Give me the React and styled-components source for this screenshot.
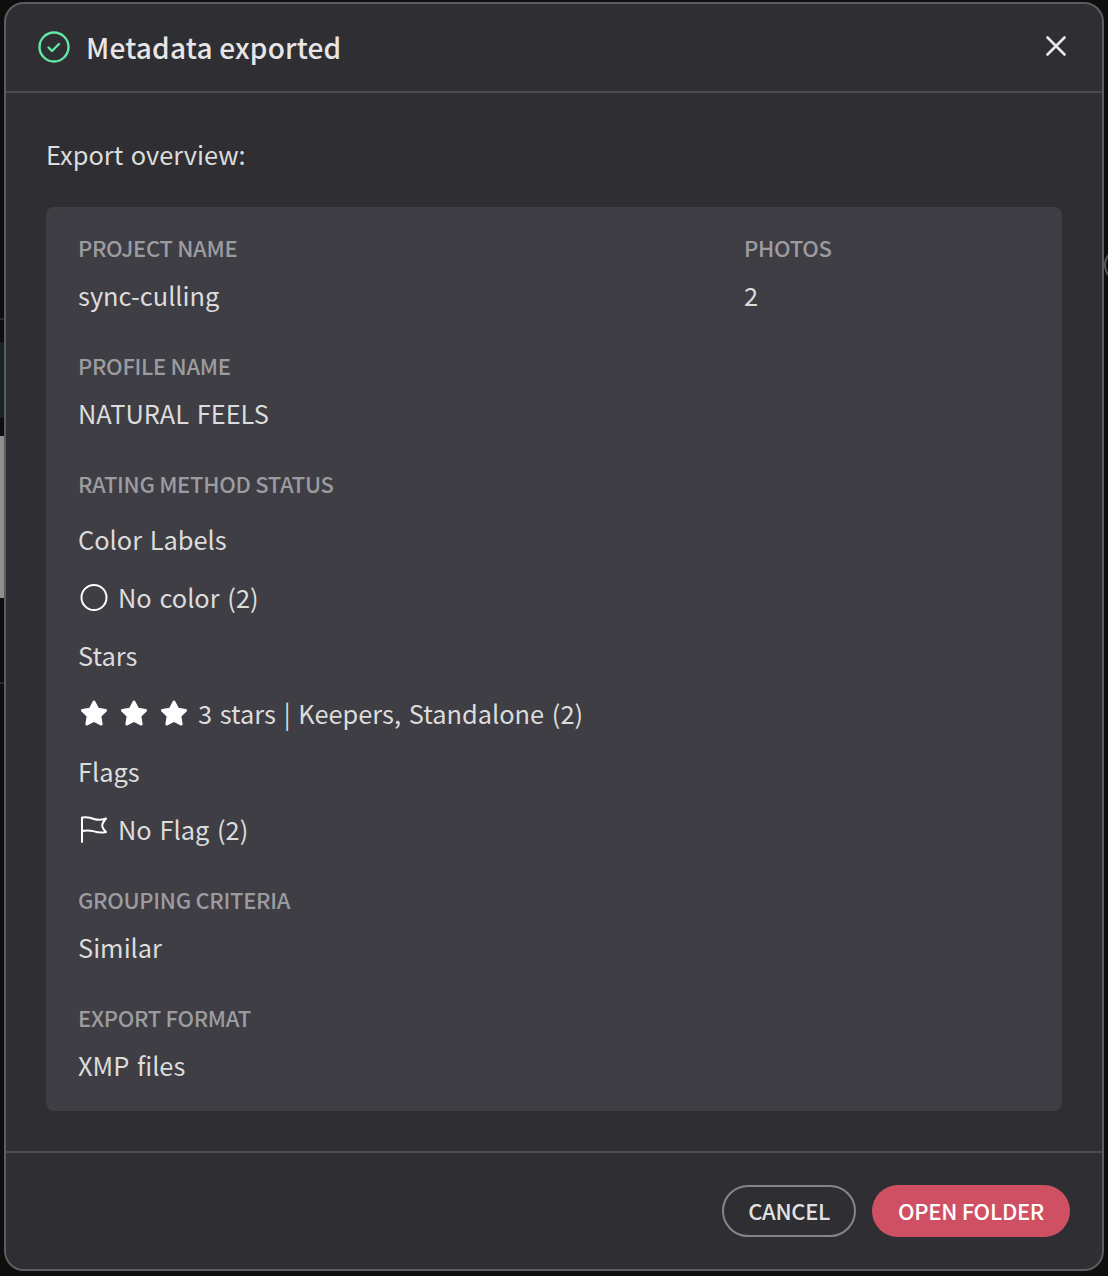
import styled, { createGlobalStyle } from 'styled-components';
import { FaStar } from 'react-icons/fa';

const Global = createGlobalStyle`
  html, body { margin: 0; padding: 0; background: #0e0e0c; }
  body { font-family: "Noto Sans CJK JP", "Noto Sans", sans-serif; }
`

const Page = styled.div`
  position: relative;
  width: 1108px;
  height: 1276px;
  padding: 2px 4px 4px 4px;
  box-sizing: border-box;
  overflow: hidden;
`

// bits of the app showing behind the dialog
const BackdropStrip = styled.div`
  position: absolute;
  left: 0;
  width: 4px;
  top: ${p => p.$top}px;
  height: ${p => p.$height}px;
  background: ${p => p.$color};
`

const BackdropArc = styled.div`
  position: absolute;
  left: 1104px;
  top: 248px;
  width: 30px;
  height: 30px;
  border: 2px solid #55555a;
  border-radius: 50%;
`

const Dialog = styled.div`
  position: relative;
  height: 1269px;
  box-sizing: border-box;
  width: 1100px;
  background: #2e2e33;
  border: 2px solid #5c5c62;
  border-radius: 20px;
  display: flex;
  flex-direction: column;
`

const Header = styled.div`
  height: 87px;
  flex: none;
  box-sizing: content-box;
  display: flex;
  align-items: center;
  padding: 0 36px 2px 32px;
  margin-top: -2px;
  gap: 16px;
  border-bottom: 2px solid #4a4a4f;
`

const Title = styled.h1`
  flex: 1;
  margin: 2px 0 0;
  font-size: 28px;
  font-weight: 500;
  letter-spacing: 0.2px;
  color: #e6e6e6;
`

const CloseButton = styled.button`
  border: 0;
  padding: 0;
  background: none;
  display: flex;
  color: #e8e8e8;
`

const Body = styled.div`
  flex: 1;
  padding: 43px 40px 40px 40px;
  display: flex;
  flex-direction: column;
`

const Intro = styled.div`
  font-size: 25.4px;
  word-spacing: 1.8px;
  line-height: 36px;
  color: #dcdcdc;
  margin-bottom: 35px;
`

const Panel = styled.div`
  background: #3e3e44;
  border-radius: 8px;
  height: 904px;
  box-sizing: border-box;
  padding: 22px 32px;
  display: grid;
  grid-template-columns: 666px 1fr;
  align-content: start;
`

const Column = styled.div`
  display: flex;
  flex-direction: column;
`

const Label = styled.div`
  font-size: 22px;
  letter-spacing: -0.3px;
  font-weight: 500;
  line-height: 36px;
  color: #9c9ca0;
  margin-top: ${p => (p.$first ? 0 : 34)}px;
  margin-bottom: ${p => (p.$wide ? 20 : 12)}px;
`

const Value = styled.div`
  font-size: 25.4px;
  word-spacing: 2px;
  line-height: 36px;
  color: #dcdcdc;
  display: flex;
  align-items: center;
  gap: 10px;
  margin-bottom: ${p => (p.$gap ? 22 : 0)}px;
`

const Stars = styled.span`
  display: inline-flex;
  gap: 12px;
  color: #fff;
  font-size: 28px;
  margin: 0 0 0 2px;
`

const Footer = styled.div`
  height: 118px;
  flex: none;
  box-sizing: border-box;
  border-top: 2px solid #4a4a4f;
  display: flex;
  justify-content: flex-end;
  align-items: flex-start;
  gap: 16px;
  padding: 32px 32px 0 0;
`

const Button = styled.button`
  height: 52px;
  box-sizing: border-box;
  padding: 0 ${p => (p.$primary ? 26 : 24)}px 2px;
  border-radius: 26px;
  font-family: inherit;
  font-size: 22px;
  letter-spacing: -0.3px;
  font-weight: 500;
  color: ${p => (p.$primary ? '#fff' : '#e2e2e2')};
  background: ${p => (p.$primary ? '#d05063' : 'transparent')};
  border: ${p => (p.$primary ? '0' : '2px solid #86868a')};
`

const CheckSvg = styled.svg`
  margin-top: 2px;
`

const CheckIcon = () => (
  <CheckSvg width="32" height="32" viewBox="0 0 32 32" fill="none" stroke="#62e8a4" strokeWidth="2.4" strokeLinecap="round" strokeLinejoin="round">
    <circle cx="16" cy="16" r="14.5" />
    <path d="M10.500 16.500l3.500 3.500 7-7" />
  </CheckSvg>
)

const CloseIcon = () => (
  <svg width="20" height="20" viewBox="0 0 20 20" stroke="currentColor" strokeWidth="2.6" strokeLinecap="round">
    <path d="M1.500 1.500l17 17M18.500 1.500l-17 17" />
  </svg>
)

const CircleIcon = () => (
  <svg width="30" height="30" viewBox="0 0 30 30" fill="none" stroke="#fff" strokeWidth="2">
    <circle cx="16" cy="15.500" r="12.500" />
  </svg>
)

const FlagIcon = () => (
  <svg width="30" height="30" viewBox="0 0 30 30" fill="none" stroke="#fff" strokeWidth="2" strokeLinejoin="round" strokeLinecap="round">
    <path d="M4 28V3.500c4-.6 8-.3 12 1.500 4 1.300 8 1 12-.5-2.500 3-3.800 5-3.800 7 0 2 1.300 4 3.800 6.500-4 1-8 .6-12-.6-4-1.200-8-1.200-12-.4" />
  </svg>
)

export default function App() {
  return (
    <Page>
      <Global />
      <BackdropStrip $top={318} $height={2} $color="#2a2a2a" />
      <BackdropStrip $top={342} $height={76} $color="#1b2427" />
      <BackdropStrip $top={436} $height={162} $color="#8f8f8c" />
      <BackdropStrip $top={682} $height={2} $color="#2a2a2a" />
      <BackdropArc />
      <Dialog>
        <Header>
          <CheckIcon />
          <Title>Metadata exported</Title>
          <CloseButton><CloseIcon /></CloseButton>
        </Header>
        <Body>
          <Intro>Export overview:</Intro>
          <Panel>
            <Column>
              <Label $first>PROJECT NAME</Label>
              <Value>sync-culling</Value>
              <Label>PROFILE NAME</Label>
              <Value>NATURAL FEELS</Value>
              <Label $wide>RATING METHOD STATUS</Label>
              <Value $gap>Color Labels</Value>
              <Value $gap><CircleIcon />No color (2)</Value>
              <Value $gap>Stars</Value>
              <Value $gap><Stars><FaStar /><FaStar /><FaStar /></Stars>3 stars | Keepers, Standalone (2)</Value>
              <Value $gap>Flags</Value>
              <Value><FlagIcon />No Flag (2)</Value>
              <Label>GROUPING CRITERIA</Label>
              <Value>Similar</Value>
              <Label>EXPORT FORMAT</Label>
              <Value>XMP files</Value>
            </Column>
            <Column>
              <Label $first>PHOTOS</Label>
              <Value>2</Value>
            </Column>
          </Panel>
        </Body>
        <Footer>
          <Button>CANCEL</Button>
          <Button $primary>OPEN FOLDER</Button>
        </Footer>
      </Dialog>
    </Page>
  )
}
